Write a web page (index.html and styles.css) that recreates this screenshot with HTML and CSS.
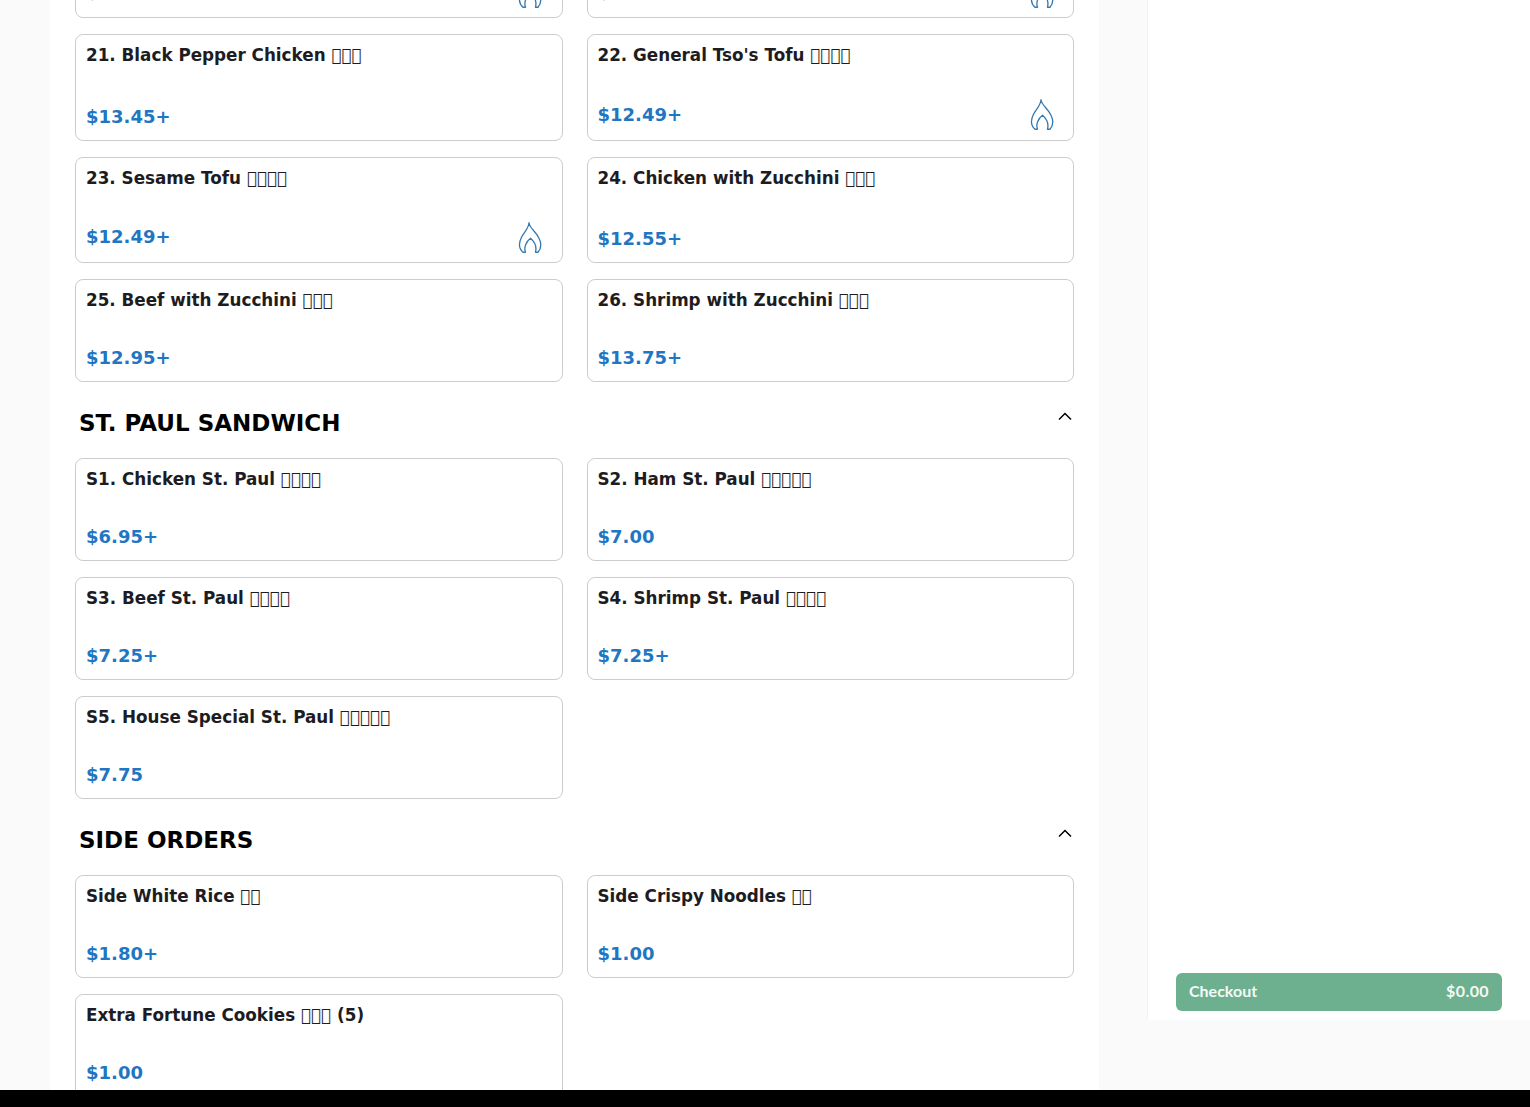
FILE: index.html
```html
<!DOCTYPE html>
<html lang="en">
<head>
  <meta charset="UTF-8">
  <meta name="viewport" content="width=device-width, initial-scale=1">
  <title>Menu</title>
  <link rel="stylesheet" href="styles.css">
</head>
<body>

  <svg class="defs" width="0" height="0">
    <symbol id="flame" viewBox="0 0 24 32">
      <path d="M11 1.500C11.500 7 18 10 21 17C23.500 22 23 27.500 20 31L17.500 31C19 25 16 20 12.500 17C8.500 20 5.500 26 7.500 31L5 31C1 27.500 0.500 22 3.500 16C6.500 10.500 10.500 7.500 11 1.500Z" fill="none" stroke="#3478b0" stroke-width="1.300" stroke-linejoin="round"/>
    </symbol>
  </svg>

  <div class="page">
    <main class="menu">

      <section class="section">
        <div class="items">
          <div class="item">
            <div class="item-name">19. Kung Pao Chicken &#xE000;&#xE000;&#xE000;</div>
            <div class="item-foot"><span class="price">$12.49+</span><svg class="flame"><use href="#flame"/></svg></div>
          </div>
          <div class="item">
            <div class="item-name">20. Kung Pao Tofu &#xE000;&#xE000;&#xE000;</div>
            <div class="item-foot"><span class="price">$12.49+</span><svg class="flame"><use href="#flame"/></svg></div>
          </div>
          <div class="item">
            <div class="item-name">21. Black Pepper Chicken &#xE000;&#xE000;&#xE000;</div>
            <div class="item-foot"><span class="price">$13.45+</span></div>
          </div>
          <div class="item">
            <div class="item-name">22. General Tso's Tofu &#xE000;&#xE000;&#xE000;&#xE000;</div>
            <div class="item-foot"><span class="price">$12.49+</span><svg class="flame"><use href="#flame"/></svg></div>
          </div>
          <div class="item">
            <div class="item-name">23. Sesame Tofu &#xE000;&#xE000;&#xE000;&#xE000;</div>
            <div class="item-foot"><span class="price">$12.49+</span><svg class="flame"><use href="#flame"/></svg></div>
          </div>
          <div class="item">
            <div class="item-name">24. Chicken with Zucchini &#xE000;&#xE000;&#xE000;</div>
            <div class="item-foot"><span class="price">$12.55+</span></div>
          </div>
          <div class="item">
            <div class="item-name">25. Beef with Zucchini &#xE000;&#xE000;&#xE000;</div>
            <div class="item-foot"><span class="price">$12.95+</span></div>
          </div>
          <div class="item">
            <div class="item-name">26. Shrimp with Zucchini &#xE000;&#xE000;&#xE000;</div>
            <div class="item-foot"><span class="price">$13.75+</span></div>
          </div>
        </div>
      </section>

      <section class="section">
        <div class="section-head">
          <h2>ST. PAUL SANDWICH</h2>
          <svg class="chevron" viewBox="0 0 14 10"><path d="M1 8.500L7 2.500L13 8.500" fill="none" stroke="#000" stroke-width="1.500"/></svg>
        </div>
        <div class="items">
          <div class="item">
            <div class="item-name">S1. Chicken St. Paul &#xE000;&#xE000;&#xE000;&#xE000;</div>
            <div class="item-foot"><span class="price">$6.95+</span></div>
          </div>
          <div class="item">
            <div class="item-name">S2. Ham St. Paul &#xE000;&#xE000;&#xE000;&#xE000;&#xE000;</div>
            <div class="item-foot"><span class="price">$7.00</span></div>
          </div>
          <div class="item">
            <div class="item-name">S3. Beef St. Paul &#xE000;&#xE000;&#xE000;&#xE000;</div>
            <div class="item-foot"><span class="price">$7.25+</span></div>
          </div>
          <div class="item">
            <div class="item-name">S4. Shrimp St. Paul &#xE000;&#xE000;&#xE000;&#xE000;</div>
            <div class="item-foot"><span class="price">$7.25+</span></div>
          </div>
          <div class="item">
            <div class="item-name">S5. House Special St. Paul &#xE000;&#xE000;&#xE000;&#xE000;&#xE000;</div>
            <div class="item-foot"><span class="price">$7.75</span></div>
          </div>
        </div>
      </section>

      <section class="section">
        <div class="section-head">
          <h2>SIDE ORDERS</h2>
          <svg class="chevron" viewBox="0 0 14 10"><path d="M1 8.500L7 2.500L13 8.500" fill="none" stroke="#000" stroke-width="1.500"/></svg>
        </div>
        <div class="items">
          <div class="item">
            <div class="item-name">Side White Rice &#xE000;&#xE000;</div>
            <div class="item-foot"><span class="price">$1.80+</span></div>
          </div>
          <div class="item">
            <div class="item-name">Side Crispy Noodles &#xE000;&#xE000;</div>
            <div class="item-foot"><span class="price">$1.00</span></div>
          </div>
          <div class="item">
            <div class="item-name">Extra Fortune Cookies &#xE000;&#xE000;&#xE000; (5)</div>
            <div class="item-foot"><span class="price">$1.00</span></div>
          </div>
        </div>
      </section>

    </main>

    <aside class="cart">
      <button class="checkout"><span>Checkout</span><span class="total">$0.00</span></button>
    </aside>
  </div>

  <div class="scrollbar"></div>

</body>
</html>
```

FILE: styles.css
```css
html, body {
  height: 100%;
}

body {
  margin: 0;
  display: flex;
  flex-direction: column;
  overflow: hidden;
  background: #fafafa;
  font-family: 'DejaVu Sans', sans-serif;
}

.defs {
  position: absolute;
}

.page {
  flex: 1;
  min-height: 0;
  display: flex;
  align-items: flex-start;
  padding-left: 50px;
  overflow: hidden;
}

.menu {
  width: 1049px;
  box-sizing: border-box;
  padding: 0 25px;
  margin-top: -88.5px;
  background: #fff;
  flex-shrink: 0;
}

.section-head {
  display: flex;
  justify-content: space-between;
  align-items: flex-start;
  height: 76px;
  padding: 0 2px 0 4px;
  box-sizing: border-box;
}

.section-head h2 {
  margin: 28px 0 0;
  font-size: 23px;
  line-height: 27px;
  font-weight: bold;
  color: #000;
}

.chevron {
  width: 14px;
  height: 10px;
  margin-top: 29px;
}

.items {
  display: grid;
  grid-template-columns: 1fr 1fr;
  gap: 16px 24px;
}

.item {
  display: flex;
  flex-direction: column;
  justify-content: space-between;
  box-sizing: border-box;
  border: 1px solid #ccc;
  border-radius: 8px;
  padding: 10px;
  background: #fff;
}

.item-name {
  height: 52px;
  font-size: 16.8px;
  line-height: 20px;
  font-weight: bold;
  color: #1c1c22;
}

.item-foot {
  display: flex;
  justify-content: space-between;
  align-items: center;
  min-height: 29px;
}

.price {
  padding-top: 2px;
  font-size: 18px;
  line-height: 23px;
  font-weight: bold;
  color: #1f76c2;
}

.flame {
  width: 24px;
  height: 32.5px;
  margin: 1px 9.5px -1px 0;
}

.cart {
  width: 383px;
  height: 1020px;
  box-sizing: border-box;
  margin-left: 48px;
  padding: 0 28px 9px 28px;
  border-left: 1px solid #f2f2f2;
  background: #fff;
  display: flex;
  flex-direction: column;
  justify-content: flex-end;
}

.checkout {
  display: flex;
  justify-content: space-between;
  align-items: center;
  height: 38px;
  padding: 0 13px 3px;
  border: none;
  border-radius: 6px;
  background: #6db08f;
  color: #f4faf7;
  font-family: 'Lato', sans-serif;
  font-size: 16px;
  font-weight: bold;
}

.total {
  letter-spacing: 0.4px;
}

.scrollbar {
  height: 17px;
  background: #000;
  flex-shrink: 0;
}
```
